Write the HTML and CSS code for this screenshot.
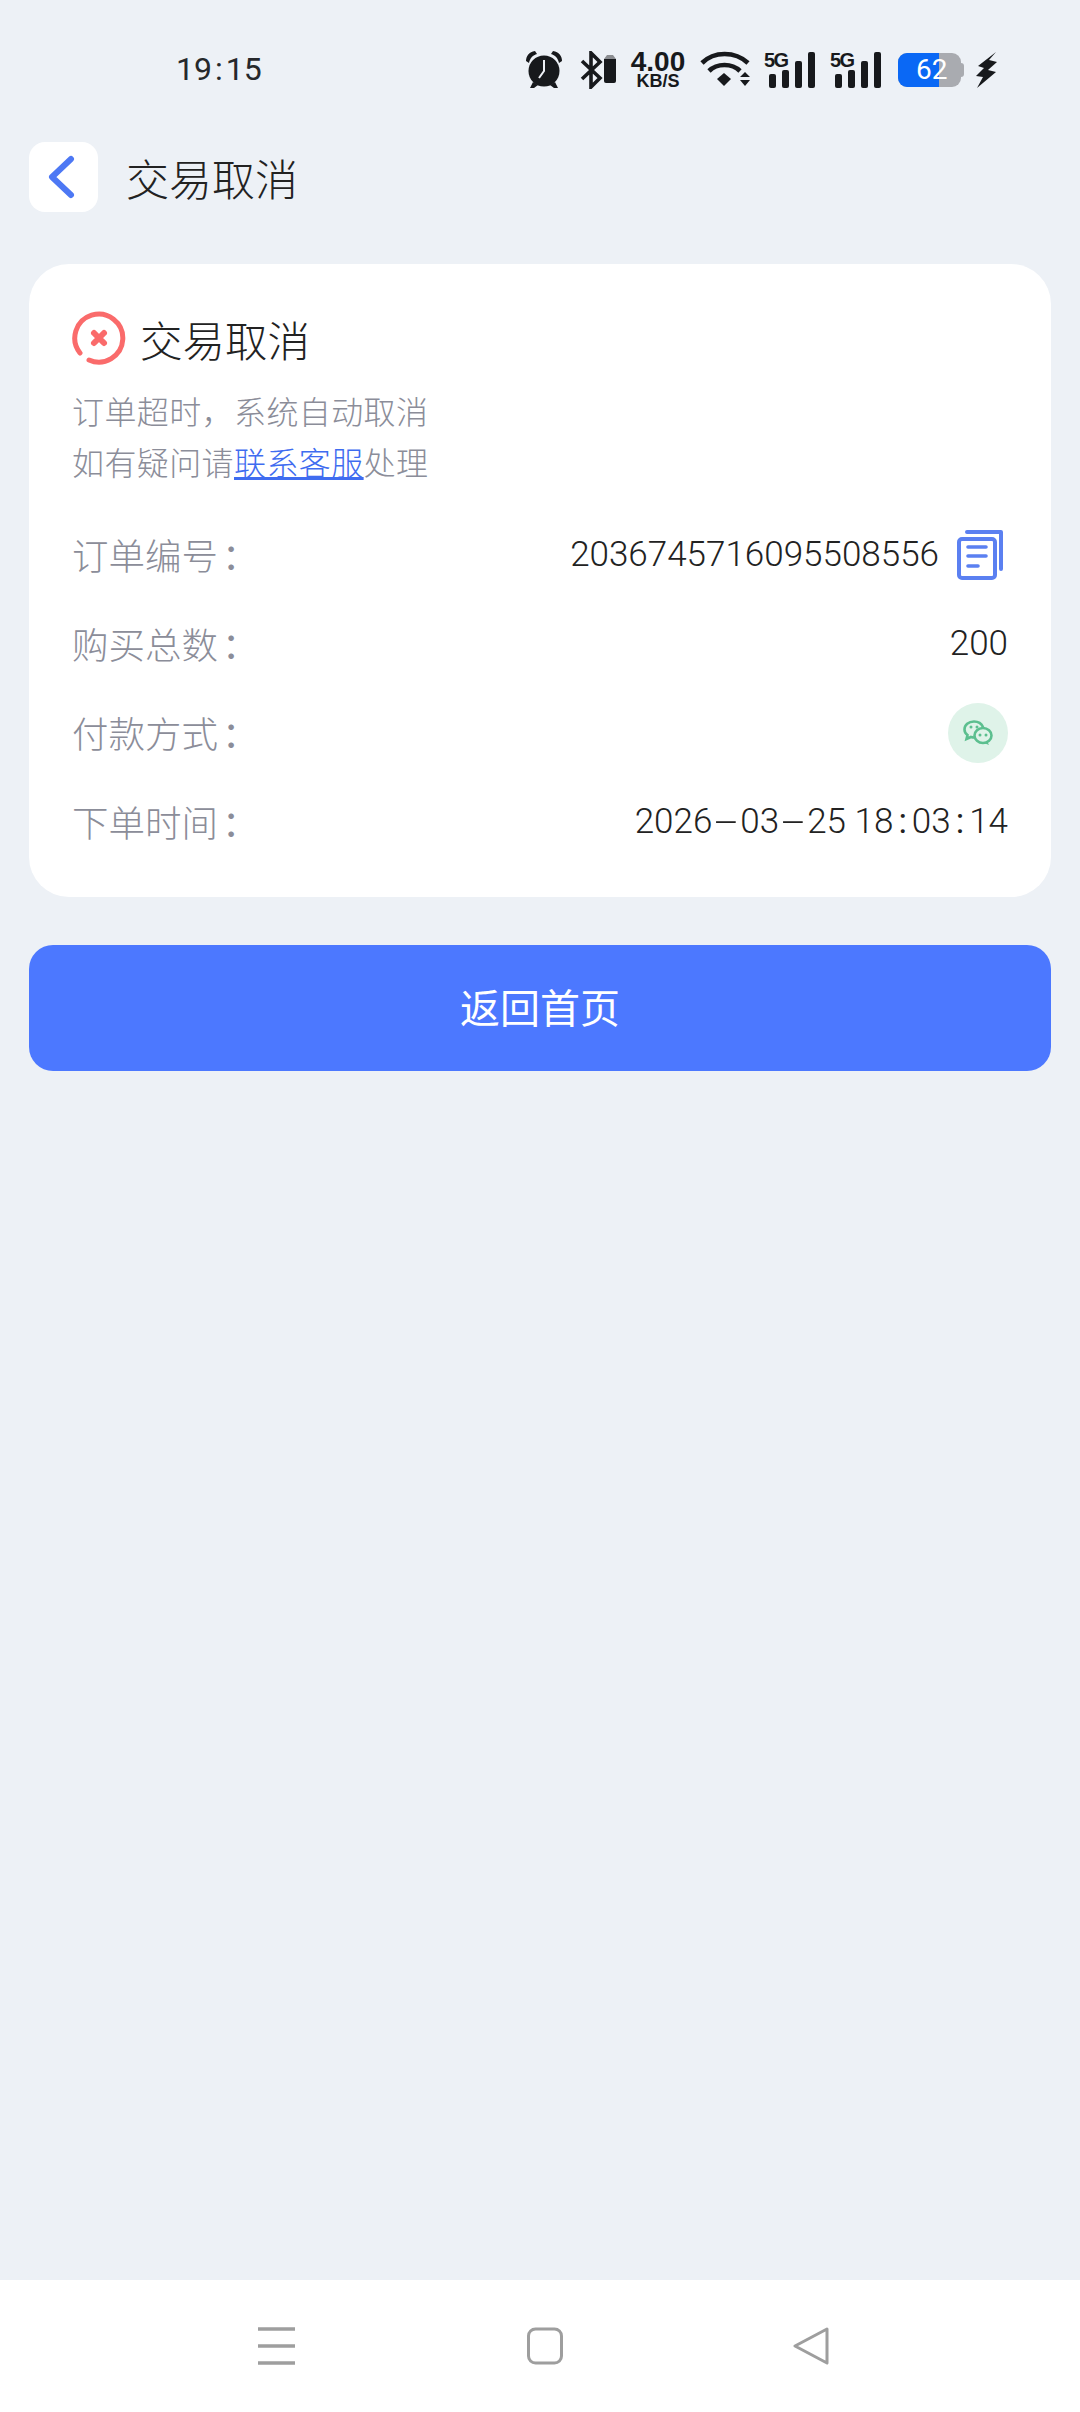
FILE: index.html
```html
<!DOCTYPE html>
<html lang="zh-CN">
<head>
    <meta charset="UTF-8">
    <meta name="viewport" content="width=device-width, initial-scale=1.0">
    <title>交易取消</title>
    <link rel="stylesheet" href="styles.css">
</head>
<body>
    <div class="page">
        <div class="status-bar">
            <span class="status-time">19<span class="colon">:</span>15</span>
            <div class="status-icons">
                <svg class="icon-alarm" width="38" height="38" viewBox="0 0 38 38">
                    <path d="M1 10 C1 5 4 1 10 0 L12 3 C8 4 5 7 4 12 Z M37 10 C37 5 34 1 28 0 L26 3 C30 4 33 7 34 12 Z" fill="#17191c"/>
                    <circle cx="19" cy="20" r="15.5" fill="#17191c"/>
                    <path d="M8 31 L5 37 H9 L13 34 Z M30 31 L33 37 H29 L25 34 Z" fill="#17191c"/>
                    <path d="M19 9 V20 L14 27" fill="none" stroke="#eef1f6" stroke-width="2"/>
                </svg>
                <svg class="icon-bt" width="37" height="38" viewBox="0 0 37 38">
                    <path d="M2 10 L20 27 L11 36 V2 L20 11 L2 28" fill="none" stroke="#17191c" stroke-width="3.6"/>
                    <path d="M24 8 L27 4 H33 L36 8 Z" fill="#8b8d91"/>
                    <path d="M24 8 H36 V30 A2 2 0 0 1 34 32 H26 A2 2 0 0 1 24 30 Z" fill="#17191c"/>
                </svg>
                <div class="net-speed">
                    <span class="net-value">4.00</span>
                    <span class="net-unit">KB/S</span>
                </div>
                <svg class="icon-wifi" width="50" height="36" viewBox="0 0 50 36">
                    <path d="M2 12 C14 0 35 0 48 12" fill="none" stroke="#17191c" stroke-width="4.6"/>
                    <path d="M9 20 C17 12 32 12 40 20" fill="none" stroke="#17191c" stroke-width="4.6"/>
                    <path d="M17 28 L24 22 L31 28 L24 35 Z" fill="#17191c"/>
                    <path d="M40 26 L45 21 L50 26 Z M40 29 L50 29 L45 35 Z" fill="#17191c"/>
                </svg>
                <div class="signal">
                    <span class="signal-label">5G</span>
                    <span class="bar bar-1"></span>
                    <span class="bar bar-2"></span>
                    <span class="bar bar-3"></span>
                    <span class="bar bar-4"></span>
                </div>
                <div class="signal">
                    <span class="signal-label">5G</span>
                    <span class="bar bar-1"></span>
                    <span class="bar bar-2"></span>
                    <span class="bar bar-3"></span>
                    <span class="bar bar-4"></span>
                </div>
                <div class="battery">
                    <div class="battery-body">
                        <div class="battery-fill"></div>
                        <span class="battery-text">62</span>
                    </div>
                    <div class="battery-cap"></div>
                </div>
                <svg class="icon-bolt" width="21" height="36" viewBox="0 0 21 36">
                    <path d="M20 0 L2 14 L8 16 L0 24 L7 25 L1 36 L20 20 L12 18 L21 10 L13 8 Z" fill="#17191c"/>
                </svg>
            </div>
        </div>

        <div class="header">
            <a class="back-btn">
                <svg width="28" height="44" viewBox="0 0 28 44">
                    <path d="M24 4 L5 22 L24 40" fill="none" stroke="#4d78f4" stroke-width="6" stroke-linecap="round" stroke-linejoin="round"/>
                </svg>
            </a>
            <h1 class="header-title">交易取消</h1>
        </div>

        <div class="content">
            <div class="card">
                <div class="card-title">
                    <svg width="54" height="54" viewBox="0 0 54 54">
                        <path d="M17 49 A24 24 0 1 0 8 42" fill="none" stroke="#fa6b6b" stroke-width="5" stroke-linecap="round"/>
                        <path d="M22 22 L32 32 M32 22 L22 32" fill="none" stroke="#fa6b6b" stroke-width="6" stroke-linecap="round"/>
                    </svg>
                    <span>交易取消</span>
                </div>
                <div class="card-desc">
                    <p>订单超时，系统自动取消</p>
                    <p>如有疑问请<a class="link">联系客服</a>处理</p>
                </div>
                <div class="info-list">
                    <div class="info-row">
                        <span class="info-label">订单编号<span class="label-colon">：</span></span>
                        <div class="info-value">
                            <span>2036745716095508556</span>
                            <svg class="copy-icon" width="46" height="50" viewBox="0 0 46 50">
                                <path d="M10 2 H44 V39" fill="none" stroke="#5b80f1" stroke-width="4" stroke-linecap="round" stroke-linejoin="round"/>
                                <rect x="2" y="9" width="36" height="39" rx="3" fill="none" stroke="#5b80f1" stroke-width="4"/>
                                <path d="M11 17 H29 M11 26 H29 M11 36 H21" fill="none" stroke="#5b80f1" stroke-width="3.6" stroke-linecap="round"/>
                            </svg>
                        </div>
                    </div>
                    <div class="info-row">
                        <span class="info-label">购买总数<span class="label-colon">：</span></span>
                        <div class="info-value"><span>200</span></div>
                    </div>
                    <div class="info-row">
                        <span class="info-label">付款方式<span class="label-colon">：</span></span>
                        <div class="info-value">
                            <div class="pay-badge">
                                <svg width="30" height="26" viewBox="0 0 30 26">
                                    <path d="M11 1.5 C5.5 1.5 1.5 5 1.5 9.5 C1.5 12 3 14 4.5 15 L3.5 19 L8 17 C9 17.3 10 17.5 11 17.5 C14 17.5 17 16 19 13.5 C20.5 11.5 21 9 20 7 C18.5 3.5 15 1.5 11 1.5 Z" fill="none" stroke="#5cbf8f" stroke-width="2.6"/>
                                    <ellipse cx="20" cy="15.5" rx="8.5" ry="7.5" fill="#dff3e9" stroke="#5cbf8f" stroke-width="2.6"/>
                                    <path d="M24 21 L26 25 L21 23 Z" fill="#5cbf8f"/>
                                    <circle cx="8" cy="7" r="1.5" fill="#5cbf8f"/>
                                    <circle cx="14" cy="7" r="1.5" fill="#5cbf8f"/>
                                    <circle cx="17" cy="15" r="1.5" fill="#5cbf8f"/>
                                    <circle cx="23" cy="15" r="1.5" fill="#5cbf8f"/>
                                </svg>
                            </div>
                        </div>
                    </div>
                    <div class="info-row">
                        <span class="info-label">下单时间<span class="label-colon">：</span></span>
                        <div class="info-value"><span>2026<span class="dash">-</span>03<span class="dash">-</span>25 18<span class="date-colon">:</span>03<span class="date-colon">:</span>14</span></div>
                    </div>
                </div>
            </div>
            <button type="button" class="home-btn">返回首页</button>
        </div>

        <div class="nav-bar">
            <svg width="38" height="38" viewBox="0 0 38 38">
                <path d="M0 2 H37 M0 19 H37 M0 36 H37" fill="none" stroke="#9e9e9e" stroke-width="3.4"/>
            </svg>
            <svg width="38" height="38" viewBox="0 0 38 38">
                <rect x="3.5" y="2" width="33" height="34" rx="7" fill="none" stroke="#9e9e9e" stroke-width="3"/>
            </svg>
            <svg width="38" height="38" viewBox="0 0 38 38">
                <path d="M35 2 L3 19 L35 36 Z" fill="none" stroke="#9e9e9e" stroke-width="3" stroke-linejoin="round"/>
            </svg>
        </div>
    </div>
</body>
</html>
```

FILE: styles.css
```css
body {
    margin: 0;
    padding: 0;
    background-color: #edf1f6;
    font-family: Roboto, "Noto Sans CJK SC", sans-serif;
    font-weight: 300;
    color: #333;
}
p, h1 {
    margin: 0;
}
.page {
    display: flex;
    flex-direction: column;
    height: 2412px;
}

/* status bar */
.status-bar {
    display: flex;
    justify-content: space-between;
    height: 142px;
    box-sizing: border-box;
    padding: 50px 83px 0 176px;
}
.status-time {
    font-size: 32px;
    line-height: 38px;
    color: #26282b;
    font-weight: 400;
}
.colon {
    margin: 0 3px;
}
.status-icons {
    display: flex;
    align-items: flex-start;
    height: 40px;
}
.icon-alarm {
    margin-top: 1px;
}
.icon-bt {
    margin: 1px 0 0 17px;
}
.net-speed {
    display: flex;
    flex-direction: column;
    align-items: center;
    margin-left: 11px;
    width: 60px;
    color: #17191c;
    font-family: "Liberation Sans", sans-serif;
    font-weight: 700;
}
.net-value {
    font-size: 28px;
    line-height: 24px;
}
.net-unit {
    font-size: 18px;
    line-height: 14px;
}
.icon-wifi {
    margin: 1px 0 0 12px;
}
.signal {
    display: flex;
    align-items: flex-end;
    justify-content: flex-end;
    gap: 6px;
    position: relative;
    width: 51px;
    height: 37px;
    margin: 1px 0 0 14px;
}
.signal + .signal {
    margin-left: 15px;
}
.signal-label {
    position: absolute;
    left: 0;
    top: 0;
    font-family: "Liberation Sans", sans-serif;
    font-size: 20px;
    line-height: 18px;
    font-weight: 700;
    color: #17191c;
    letter-spacing: -1.5px;
}
.bar {
    width: 7px;
    background-color: #17191c;
    border-radius: 2px;
}
.bar-1 { height: 14px; }
.bar-2 { height: 18px; }
.bar-3 { height: 27px; }
.bar-4 { height: 36px; }
.battery {
    display: flex;
    align-items: center;
    margin: 3px 0 0 17px;
}
.battery-body {
    position: relative;
    width: 63px;
    height: 34px;
    border-radius: 9px;
    background-color: #a9abb0;
    overflow: hidden;
}
.battery-fill {
    width: 41px;
    height: 100%;
    background-color: #0a68f5;
}
.battery-text {
    position: absolute;
    left: 18px;
    top: 0;
    font-size: 28px;
    line-height: 34px;
    color: #fff;
    font-weight: 400;
}
.battery-cap {
    width: 3px;
    height: 14px;
    background-color: #a9abb0;
    border-radius: 0 3px 3px 0;
}
.icon-bolt {
    margin: 2px 0 0 12px;
}

/* header */
.header {
    display: flex;
    align-items: center;
    height: 70px;
    margin-left: 29px;
}
.back-btn {
    display: flex;
    align-items: center;
    justify-content: center;
    width: 69px;
    height: 70px;
    background-color: #fff;
    border-radius: 16px;
}
.back-btn svg {
    margin-right: 5px;
}
.header-title {
    margin-left: 28px;
    font-size: 43px;
    font-weight: 300;
    color: #222;
}

/* card */
.content {
    flex: 1;
    padding: 52px 29px 0;
}
.card {
    box-sizing: border-box;
    height: 633px;
    padding: 46px 43px 0;
    background-color: #fff;
    border-radius: 40px;
}
.card-title {
    display: flex;
    align-items: center;
    gap: 14px;
    height: 56px;
    font-size: 42.5px;
    color: #222;
}
.card-desc {
    margin-top: 22px;
    font-size: 32px;
    line-height: 51px;
    letter-spacing: 0.4px;
    color: #8b8d99;
}
.link {
    color: #3f6cf0;
    text-decoration: underline;
}
.info-list {
    margin-top: 20px;
}
.info-row {
    display: flex;
    align-items: center;
    justify-content: space-between;
    height: 89px;
    font-size: 35px;
}
.info-label {
    font-size: 36.5px;
    color: #8b8d99;
}
.label-colon {
    display: inline-block;
    width: 24px;
    margin-left: 4px;
    font-weight: 400;
}
.info-value {
    display: flex;
    align-items: center;
    gap: 18px;
    color: #222;
}
.copy-icon {
    margin-right: 5px;
}
.dash {
    display: inline-block;
    width: 28px;
    text-align: center;
    transform: scaleX(2.4);
}
.date-colon {
    margin: 0 5px;
    font-weight: 400;
}
.pay-badge {
    display: flex;
    align-items: center;
    justify-content: center;
    width: 60px;
    height: 60px;
    border-radius: 50%;
    background-color: #dff3e9;
}

/* button */
.home-btn {
    display: block;
    width: 100%;
    height: 126px;
    margin-top: 48px;
    padding: 0 0 4px;
    border: none;
    border-radius: 24px;
    background-color: #4c78ff;
    color: #fff;
    font-family: "Noto Sans CJK SC", sans-serif;
    font-size: 40px;
    cursor: pointer;
}

/* bottom nav */
.nav-bar {
    display: flex;
    justify-content: space-between;
    align-items: center;
    height: 132px;
    padding: 0 250px 0 258px;
    background-color: #fff;
}
```
